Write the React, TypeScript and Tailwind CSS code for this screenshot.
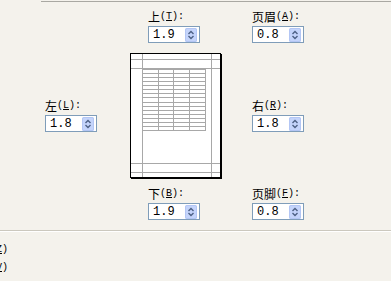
const cjk = "font-['Noto_Sans_CJK_SC',sans-serif]";
const mono = "font-['Liberation_Mono',monospace]";

function Label({ name, hot }: { name: string; hot: string }) {
    return (
        <div className="flex h-[14px] items-center leading-[14px] text-black whitespace-nowrap">
            <span className={`${cjk} text-[12px]`}>{name}</span>
            <span className={`${mono} text-[10px]`}>
                (<span className="underline underline-offset-1">{hot}</span>):
            </span>
        </div>
    );
}

function Spinner() {
    return (
        <svg width="12" height="14" viewBox="0 0 12 14" className="mr-[2px] shrink-0">
            <rect x="0" y="0" width="12" height="14" rx="1.5" fill="#c4d4fb" />
            <rect x="0.5" y="0.5" width="11" height="13" rx="1.5" fill="none" stroke="#b3c6f4" />
            <polyline points="3.5,6 6,3.5 8.5,6" fill="none" stroke="#4d6185" strokeWidth="1.4" />
            <polyline points="3.5,8 6,10.5 8.5,8" fill="none" stroke="#4d6185" strokeWidth="1.4" />
        </svg>
    );
}

function Field({ name, hot, value }: { name: string; hot: string; value: string }) {
    return (
        <div className="flex flex-col">
            <Label name={name} hot={hot} />
            <div className="mt-[2px] flex h-[17px] w-[52px] items-center border border-[#7f9db9] bg-white">
                <span className={`${mono} flex-1 pl-[4px] text-[12px] leading-none text-black`}>
                    {value}
                </span>
                <Spinner />
            </div>
        </div>
    );
}

function PagePreview() {
    const rows = Array.from({ length: 16 }, (_, i) => 15 + i * 4.07);
    const cols = [12, 27.5, 43, 58.5, 75];
    return (
        <div className="h-[125px] w-[91px] border border-black bg-white shadow-[1px_1px_0_#000]">
            <svg width="89" height="123" viewBox="0 0 89 123">
                <g stroke="#a8a8a8" strokeWidth="1" shapeRendering="crispEdges">
                    <line x1="11.5" y1="0" x2="11.5" y2="123" />
                    <line x1="80.5" y1="0" x2="80.5" y2="123" />
                    <line x1="0" y1="5.5" x2="89" y2="5.5" />
                    <line x1="0" y1="14.5" x2="89" y2="14.5" />
                    <line x1="0" y1="109.5" x2="89" y2="109.5" />
                    <line x1="0" y1="118.5" x2="89" y2="118.5" />
                    {rows.map((y) => (
                        <line key={y} x1="11.5" y1={Math.round(y) + 0.5} x2="75" y2={Math.round(y) + 0.5} />
                    ))}
                    {cols.map((x) => (
                        <line key={x} x1={Math.round(x) - 0.5} y1="14.5" x2={Math.round(x) - 0.5} y2="76" />
                    ))}
                </g>
            </svg>
        </div>
    );
}

function CutLabel({ text, hot }: { text: string; hot: string }) {
    return (
        <div className="flex h-[18px] w-[8px] items-center justify-end overflow-hidden whitespace-nowrap text-black">
            <span className={`${cjk} text-[12px]`}>{text}</span>
            <span className={`${mono} text-[10px]`}>
                (<span className="underline underline-offset-1">{hot}</span>)
            </span>
        </div>
    );
}

export default function App() {
    return (
        <div className="h-[281px] w-[391px] overflow-hidden bg-[#f4f2ec]">
            <div className="ml-[41px] mt-px h-px bg-[#a9a8a2]" />
            <div className="ml-[148px] mt-[8px] flex gap-[52px]">
                <Field name="上" hot="T" value="1.9" />
                <Field name="页眉" hot="A" value="0.8" />
            </div>
            <div className="mt-[10px] flex items-center">
                <div className="ml-[45px] w-[85px]">
                    <Field name="左" hot="L" value="1.8" />
                </div>
                <PagePreview />
                <div className="ml-[31px]">
                    <Field name="右" hot="R" value="1.8" />
                </div>
            </div>
            <div className="ml-[148px] mt-[9px] flex gap-[52px]">
                <Field name="下" hot="B" value="1.9" />
                <Field name="页脚" hot="F" value="0.8" />
            </div>
            <div className="mt-[10px] h-px bg-[#cbc8be]" />
            <div className="h-px bg-white" />
            <div className="mt-[8px] flex flex-col">
                <CutLabel text="水平" hot="Z" />
                <CutLabel text="垂直" hot="V" />
            </div>
        </div>
    );
}
